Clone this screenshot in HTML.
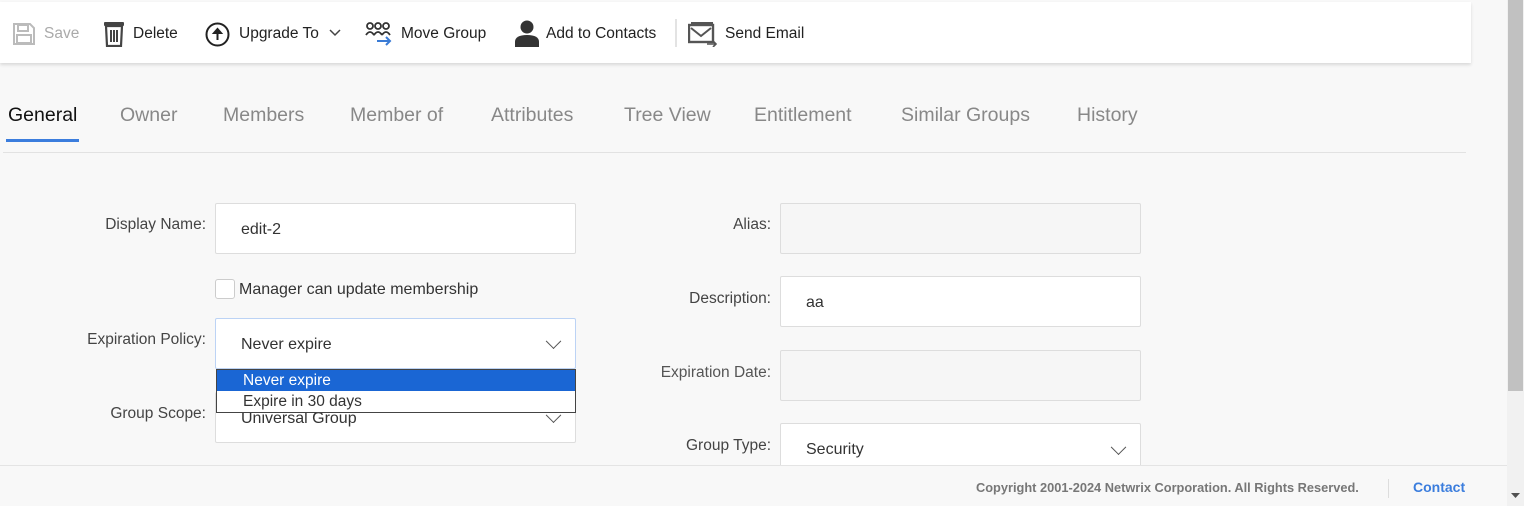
<!DOCTYPE html>
<html><head><meta charset="utf-8"><style>
*{box-sizing:border-box;margin:0;padding:0}
body{width:1524px;height:506px;overflow:hidden;background:#f8f8f8;font-family:"Liberation Sans",sans-serif;color:#333;position:relative}
.a{position:absolute;white-space:nowrap}
.tb{position:absolute;left:0;top:2px;width:1471px;height:61px;background:#fff;box-shadow:0 2px 3px rgba(0,0,0,.12)}
.tl{font-size:15.5px;color:#222;top:25px}
.tab{font-size:19.5px;color:#888;top:104px}
.lbl{font-size:15.5px;color:#444;text-align:right}
.in{position:absolute;background:#fff;border:1px solid #ddd;border-radius:2px;font-size:16px;color:#333;padding-left:25px;padding-top:2px;display:flex;align-items:center}
.dis{background:#f6f6f6}
.chev{position:absolute;right:16px;top:50%;width:11px;height:11px;border-right:1.6px solid #555;border-bottom:1.6px solid #555;transform:translateY(-75%) rotate(45deg)}
</style></head><body>
<div class="tb"></div>
<svg class="a" style="left:12px;top:22px" width="24" height="24" viewBox="0 0 24 24"><path d="M2 2h16l4 4v16H2z" fill="none" stroke="#bbb" stroke-width="2"/><rect x="6" y="3" width="10" height="6" fill="none" stroke="#bbb" stroke-width="2"/><rect x="5" y="13" width="14" height="8" fill="none" stroke="#bbb" stroke-width="2"/></svg>
<div class="a tl" style="left:44px;color:#aaa">Save</div>
<svg class="a" style="left:103px;top:21px" width="22" height="26" viewBox="0 0 22 26"><rect x="1" y="1" width="20" height="4" rx="1" fill="#444"/><path d="M3 5h16l-1 20H4z" fill="none" stroke="#444" stroke-width="2.2"/><path d="M8 9v12M11 9v12M14 9v12" stroke="#444" stroke-width="2"/></svg>
<div class="a tl" style="left:133px">Delete</div>
<svg class="a" style="left:205px;top:22px" width="25" height="25" viewBox="0 0 25 25"><circle cx="12.5" cy="12.5" r="11" fill="none" stroke="#222" stroke-width="2"/><path d="M12.5 18V8M9 11l3.5-4 3.5 4z" stroke="#222" stroke-width="2" fill="#222"/></svg>
<div class="a tl" style="left:239px">Upgrade To</div>
<svg class="a" style="left:329px;top:29px" width="12" height="8" viewBox="0 0 12 8"><path d="M1 1l5 5 5-5" fill="none" stroke="#444" stroke-width="1.5"/></svg>
<svg class="a" style="left:365px;top:21px" width="28" height="26" viewBox="0 0 28 26"><g fill="none" stroke="#333" stroke-width="1.8"><circle cx="5" cy="5" r="3"/><circle cx="13" cy="5" r="3"/><circle cx="21" cy="5" r="3"/><path d="M1 14q4-6 8 0M9 14q4-6 8 0M17 14q4-6 8 0"/></g><path d="M12 20h13M21 16l4 4-4 4" stroke="#3a7bd5" stroke-width="2" fill="none"/></svg>
<div class="a tl" style="left:401px">Move Group</div>
<svg class="a" style="left:514px;top:20px" width="26" height="27" viewBox="0 0 26 27"><circle cx="13" cy="7" r="6.5" fill="#333"/><path d="M1 27v-5q0-7 12-7t12 7v5z" fill="#333"/></svg>
<div class="a tl" style="left:546px">Add to Contacts</div>
<div class="a" style="left:675px;top:19px;width:2px;height:28px;background:#e3e3e3"></div>
<svg class="a" style="left:688px;top:21px" width="30" height="26" viewBox="0 0 30 26"><rect x="3" y="1" width="22" height="4" fill="#555"/><rect x="1" y="4" width="24" height="17" fill="none" stroke="#555" stroke-width="2.4"/><path d="M3 7l10 8 10-8" fill="none" stroke="#555" stroke-width="2"/><path d="M19 23h9M25 20l3 3-3 3" stroke="#555" stroke-width="1.6" fill="none"/></svg>
<div class="a tl" style="left:725px">Send Email</div>

<div class="a tab" style="left:8px;color:#111">General</div>
<div class="a" style="left:6px;top:139px;width:73px;height:3px;background:#3b7ddd"></div>
<div class="a tab" style="left:120px">Owner</div>
<div class="a tab" style="left:223px">Members</div>
<div class="a tab" style="left:350px">Member of</div>
<div class="a tab" style="left:491px">Attributes</div>
<div class="a tab" style="left:624px">Tree View</div>
<div class="a tab" style="left:754px">Entitlement</div>
<div class="a tab" style="left:901px">Similar Groups</div>
<div class="a tab" style="left:1077px">History</div>
<div class="a" style="left:3px;top:152px;width:1463px;height:1px;background:#e2e2e2"></div>

<div class="a lbl" style="right:1318px;top:216px">Display Name:</div>
<div class="in" style="left:215px;top:203px;width:361px;height:51px">edit-2</div>
<div class="a" style="left:215px;top:279px;width:20px;height:20px;border:1px solid #ccc;border-radius:3px;background:#fff"></div>
<div class="a" style="left:239px;top:281px;font-size:16px;color:#333">Manager can update membership</div>
<div class="a lbl" style="right:1318px;top:331px">Expiration Policy:</div>
<div class="a lbl" style="right:1318px;top:405px">Group Scope:</div>
<div class="in" style="left:215px;top:392px;width:361px;height:51px">Universal Group<span class="chev"></span></div>
<div class="in" style="left:215px;top:318px;width:361px;height:51px;border-color:#bcd3f5">Never expire<span class="chev"></span></div>
<div class="a" style="left:216px;top:369px;width:360px;height:44px;border:1px solid #444;background:#fff;font-size:15.5px">
<div style="background:#1a66d4;color:#fff;height:21px;padding-left:26px;line-height:22px">Never expire</div>
<div style="color:#333;padding-left:26px;line-height:21px">Expire in 30 days</div></div>

<div class="a lbl" style="right:753px;top:216px">Alias:</div>
<div class="in dis" style="left:780px;top:203px;width:361px;height:51px"></div>
<div class="a lbl" style="right:753px;top:290px">Description:</div>
<div class="in" style="left:780px;top:276px;width:361px;height:51px">aa</div>
<div class="a lbl" style="right:753px;top:364px;color:#555">Expiration Date:</div>
<div class="in dis" style="left:780px;top:350px;width:361px;height:51px"></div>
<div class="a lbl" style="right:753px;top:437px">Group Type:</div>
<div class="in" style="left:780px;top:423px;width:361px;height:51px">Security<span class="chev" style="top:54%"></span></div>

<div class="a" style="left:0;top:465px;width:1507px;height:41px;background:#f8f8f8;border-top:1px solid #e4e4e4"></div>
<div class="a" style="left:976px;top:480px;font-size:12.8px;color:#777;font-weight:bold">Copyright 2001-2024 Netwrix Corporation. All Rights Reserved.</div>
<div class="a" style="left:1388px;top:479px;width:1px;height:19px;background:#ddd"></div>
<div class="a" style="left:1413px;top:479px;font-size:14px;color:#3b7ddd;font-weight:bold">Contact</div>

<div class="a" style="left:1507px;top:0;width:17px;height:506px;background:#f1f1f1"></div>
<div class="a" style="left:1508px;top:0;width:15px;height:391px;background:#c1c1c1"></div>
<svg class="a" style="left:1510px;top:492px" width="11" height="7" viewBox="0 0 11 7"><path d="M1 1h9l-4.5 5z" fill="#505050"/></svg>
</body></html>
